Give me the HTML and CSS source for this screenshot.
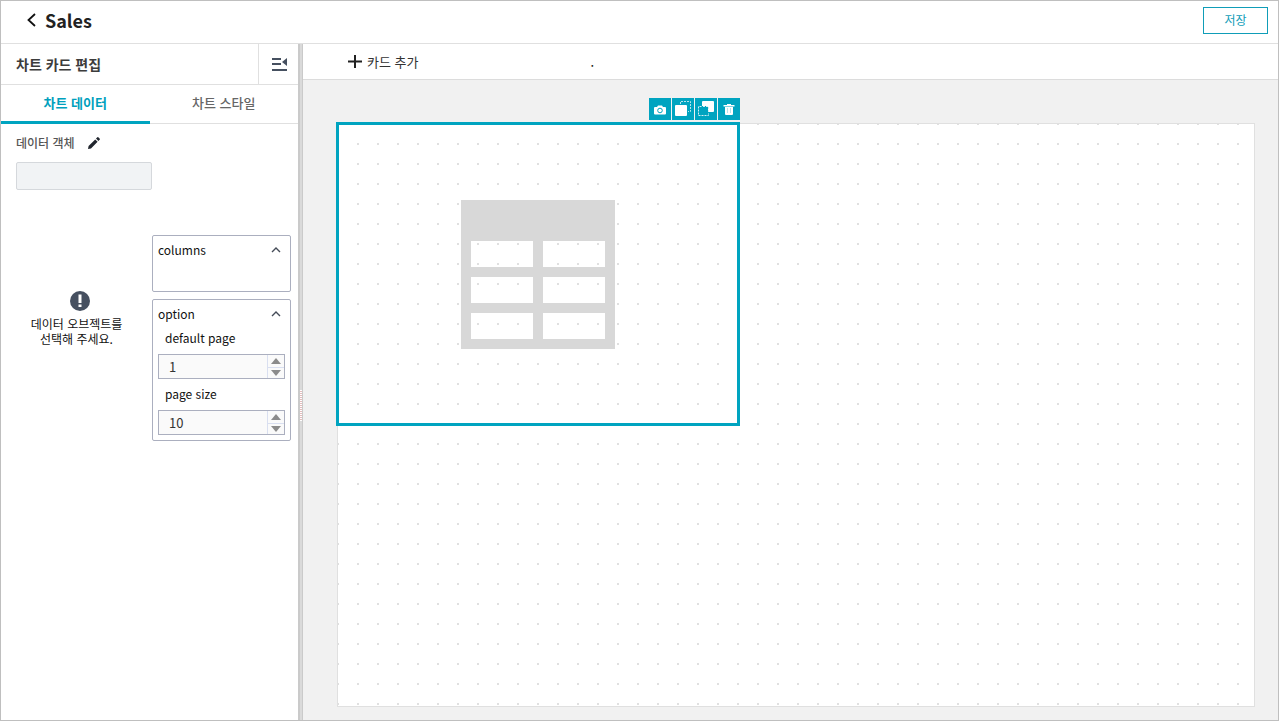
FILE: index.html
```html
<!DOCTYPE html>
<html lang="ko">
<head>
<meta charset="utf-8">
<title>Sales</title>
<link rel="stylesheet" href="styles.css">
</head>
<body>
<div class="app">
  <header class="topbar">
    <button class="back" type="button" aria-label="뒤로">
      <svg width="10" height="14" viewBox="0 0 10 14"><path d="M9 1L2.500 7l6.500 6" fill="none" stroke="#111" stroke-width="1.800"/></svg>
    </button>
    <h1 class="page-title">Sales</h1>
    <button class="save" type="button">저장</button>
  </header>
  <div class="workspace">
    <aside class="sidebar">
      <div class="side-head">
        <h2 class="side-title">차트 카드 편집</h2>
        <button class="collapse" type="button" aria-label="패널 접기">
          <svg width="16" height="14" viewBox="0 0 16 14"><path d="M1 2h9M1 7h9M1 13h15" stroke="#465060" stroke-width="2" fill="none"/><path d="M16 1v8l-5-4z" fill="#465060"/></svg>
        </button>
      </div>
      <div class="tabs" role="tablist">
        <button class="tab tab-active" type="button" role="tab" aria-selected="true">차트 데이터</button>
        <button class="tab" type="button" role="tab" aria-selected="false">차트 스타일</button>
      </div>
      <div class="source">
        <div class="source-head">
          <label class="source-label" for="source">데이터 객체</label>
          <button class="edit" type="button" aria-label="편집">
            <svg width="12" height="12" viewBox="0 0 12 12" fill="#20252d"><path d="M0 12l.6-3L7.200 2.400l2.400 2.400L3 11.400zM8 1.600L9.400.2q.4-.4.9 0l1.500 1.500q.4.400 0 .9L10.400 4z"/></svg>
          </button>
        </div>
        <input class="source-input" id="source" type="text" readonly>
      </div>
      <div class="settings">
        <div class="notice">
          <svg class="notice-icon" width="20" height="20" viewBox="0 0 20 20"><circle cx="10" cy="10" r="10" fill="#465060"/><path d="M8.500 3.500h3V12h-3zM8.500 13.500h3v2.500h-3z" fill="#fff"/></svg>
          <p class="notice-text">데이터 오브젝트를<br>선택해 주세요.</p>
        </div>
        <div class="panels">
          <section class="panel panel-columns">
            <button class="panel-head" type="button">columns
              <svg width="10" height="6" viewBox="0 0 10 6"><path d="M1 5l4-4 4 4" fill="none" stroke="#444b57" stroke-width="1.400"/></svg>
            </button>
          </section>
          <section class="panel">
            <button class="panel-head" type="button">option
              <svg width="10" height="6" viewBox="0 0 10 6"><path d="M1 5l4-4 4 4" fill="none" stroke="#444b57" stroke-width="1.400"/></svg>
            </button>
            <label class="field-label" for="default-page">default page</label>
            <div class="spin">
              <input class="spin-input" id="default-page" type="number" value="1">
              <div class="spin-buttons">
                <button class="spin-button" type="button" aria-label="증가"><svg width="10" height="6" viewBox="0 0 10 6"><path d="M0 6l5-6 5 6z" fill="#8b8b8b"/></svg></button>
                <button class="spin-button" type="button" aria-label="감소"><svg width="10" height="6" viewBox="0 0 10 6"><path d="M0 0l5 6 5-6z" fill="#8b8b8b"/></svg></button>
              </div>
            </div>
            <label class="field-label" for="page-size">page size</label>
            <div class="spin">
              <input class="spin-input" id="page-size" type="number" value="10">
              <div class="spin-buttons">
                <button class="spin-button" type="button" aria-label="증가"><svg width="10" height="6" viewBox="0 0 10 6"><path d="M0 6l5-6 5 6z" fill="#8b8b8b"/></svg></button>
                <button class="spin-button" type="button" aria-label="감소"><svg width="10" height="6" viewBox="0 0 10 6"><path d="M0 0l5 6 5-6z" fill="#8b8b8b"/></svg></button>
              </div>
            </div>
          </section>
        </div>
      </div>
    </aside>
    <div class="splitter"><span class="grip"></span></div>
    <main class="editor">
      <div class="toolbar">
        <button class="add-card" type="button">
          <svg width="14" height="14" viewBox="0 0 14 14"><path d="M7 0v13M0 6.500h14" stroke="#222" stroke-width="2"/></svg>카드 추가
        </button>
        <span class="mark">.</span>
      </div>
      <div class="stage">
        <div class="canvas">
          <div class="card">
            <div class="card-tools">
              <button class="tool" type="button" aria-label="캡처"><svg width="22" height="22" viewBox="0 0 22 22"><path d="M5 10q0-1 1-1h2l1-1.500h4L14 9h2q1 0 1 1v5.500q0 1-1 1H6q-1 0-1-1z" fill="#fff"/><circle cx="11" cy="12.500" r="2.300" fill="none" stroke="#00a4c0"/></svg></button>
              <button class="tool" type="button" aria-label="맨 앞으로"><svg width="22" height="22" viewBox="0 0 22 22"><path d="M8.500 6V3.500h10v10H16" fill="none" stroke="#b5e4ec" stroke-dasharray="2 1"/><rect x="3" y="7" width="12" height="11" rx="1" fill="#fff"/></svg></button>
              <button class="tool" type="button" aria-label="맨 뒤로"><svg width="22" height="22" viewBox="0 0 22 22"><rect x="7" y="3" width="12" height="11" rx="1" fill="#fff"/><path d="M3 8h10v10H3z" fill="#00a4c0"/><path d="M6.500 8.500h-3v9h10V15M8 8.500h5.500V14" fill="none" stroke="#d5f0f4" stroke-dasharray="2 1"/></svg></button>
              <button class="tool" type="button" aria-label="삭제"><svg width="22" height="22" viewBox="0 0 22 22"><path d="M5.500 7H9V6h4v1h3.500v1.500h-11zM7 9h8v7q0 1-1 1H8q-1 0-1-1z" fill="#fff"/><path d="M9.500 10v5M12.500 10v5" stroke="#b5e4ec"/></svg></button>
            </div>
            <svg class="placeholder" width="154" height="149" viewBox="0 0 154 149"><path fill="#d8d8d8" fill-rule="evenodd" d="M0 0h154v149H0zM10 41v26h62V41zM82 41v26h62V41zM10 77v26h62V77zM82 77v26h62V77zM10 113v26h62v-26zM82 113v26h62v-26z"/></svg>
          </div>
        </div>
      </div>
    </main>
  </div>
</div>
</body>
</html>
```

FILE: styles.css
```css
* { box-sizing: border-box; }
body {
  margin: 0;
  padding: 0 2px 3px 0;
  height: 100vh;
  background: #fff;
  color: #111;
  font: 13px/20px "Noto Sans CJK KR", sans-serif;
}
button { margin: 0; padding: 0; border: 0; background: none; color: inherit; font: inherit; cursor: pointer; }
input { font: inherit; color: inherit; }
h1, h2, p { margin: 0; }
svg { display: block; flex: none; }

.app { display: flex; flex-direction: column; height: 100%; border: 1px solid #bfbfbf; }
.topbar {
  display: flex;
  align-items: center;
  height: 43px;
  flex: none;
  padding: 0 10px 4px 25px;
  border-bottom: 1px solid #e0e0e0;
}
.back { margin-right: 9px; }
.page-title { font-size: 18px; line-height: 24px; font-weight: 700; color: #222; }
.save {
  width: 65px;
  height: 27px;
  margin-left: auto;
  border: 1px solid #0f9db8;
  color: #0f9db8;
  font-size: 12px;
}
.workspace { display: flex; flex: 1; min-height: 0; }

.sidebar { width: 297px; flex: none; background: #fff; }
.side-head { display: flex; height: 41px; border-bottom: 1px solid #e0e0e0; }
.side-title { flex: 1; padding-left: 15px; font-size: 14px; line-height: 40px; font-weight: 700; color: #3c3c3c; }
.collapse { display: flex; align-items: center; justify-content: center; width: 40px; border-left: 1px solid #e0e0e0; }
.tabs { display: flex; height: 39px; }
.tab { flex: 1; border-bottom: 1px solid #e0e0e0; padding-bottom: 2px; color: #666; font-weight: 500; }
.tab-active { border-bottom: 3px solid #00a4c0; padding-bottom: 0; color: #00a0bd; font-weight: 700; }
.source { padding: 9px 15px 0; }
.source-head { display: flex; align-items: center; gap: 13px; height: 20px; margin-bottom: 9px; }
.source-label { font-size: 12px; font-weight: 500; color: #555; }
.source-input { display: block; width: 136px; height: 28px; border: 1px solid #d5d8dc; border-radius: 2px; background: #f1f3f5; }

.settings { display: flex; align-items: center; padding: 45px 7px 0 0; }
.notice { flex: 1; padding-bottom: 40px; }
.notice-icon { margin: 0 auto 5px 69px; }
.notice-text { font-size: 12px; line-height: 15px; text-align: center; }
.panels { display: flex; flex-direction: column; gap: 7px; width: 139px; font-size: 12px; }
.panel { padding: 0 5px 5px; border: 1px solid #abafbf; border-radius: 2px; }
.panel-columns { height: 57px; }
.panel-head { display: flex; align-items: center; justify-content: space-between; width: 100%; height: 28px; padding-right: 4px; }
.field-label { display: block; height: 26px; padding-left: 7px; }
.spin { display: flex; height: 25px; border: 1px solid #abafbf; background: #fafafa; }
.spin + .field-label { margin-top: 5px; }
.spin-input { flex: 1; min-width: 0; border: 0; padding: 0 0 0 10px; background: none; color: #333; font-size: 13px; appearance: textfield; }
.spin-input::-webkit-inner-spin-button { appearance: none; display: none; }
.spin-buttons { display: flex; flex-direction: column; width: 17px; padding-top: 1px; border-left: 1px solid #d9dff0; }
.spin-button { display: flex; flex: 1; align-items: center; justify-content: center; }
.spin-button + .spin-button { border-top: 1px solid #d9dff0; }

.splitter {
  display: flex;
  align-items: center;
  justify-content: flex-end;
  width: 5px;
  flex: none;
  border: solid #cacaca;
  border-width: 0 1px 0 2px;
  background: #dadada;
}
.grip { width: 2px; height: 31px; margin-bottom: -46px; background: repeating-linear-gradient(#fff 0 1px, #e3bcbc 1px 2px); }

.editor { display: flex; flex: 1; flex-direction: column; min-width: 0; }
.toolbar { display: flex; align-items: center; height: 36px; flex: none; padding-left: 45px; border-bottom: 1px solid #dcdcdc; }
.add-card { display: flex; align-items: center; gap: 5px; color: #333; }
.mark { margin-left: 172px; }
.stage { display: flex; flex: 1; padding: 43px 23px 13px 34px; background: #f1f1f1; }
.canvas {
  position: relative;
  flex: 1;
  border: 1px solid #e0e0e0;
  background: conic-gradient(from 270deg at 2px 2px, #e0e0e0 90deg, transparent 0) -1px -1px / 20px 20px #fff;
}
.card {
  position: absolute;
  left: -2px;
  top: -2px;
  display: flex;
  align-items: center;
  justify-content: center;
  width: 404px;
  height: 304px;
  border: 3px solid #00a4c0;
}
.card-tools { position: absolute; right: -3px; bottom: 100%; display: flex; gap: 1px; margin-bottom: 5px; }
.tool { width: 22px; height: 22px; background: #00a4c0; }
```
